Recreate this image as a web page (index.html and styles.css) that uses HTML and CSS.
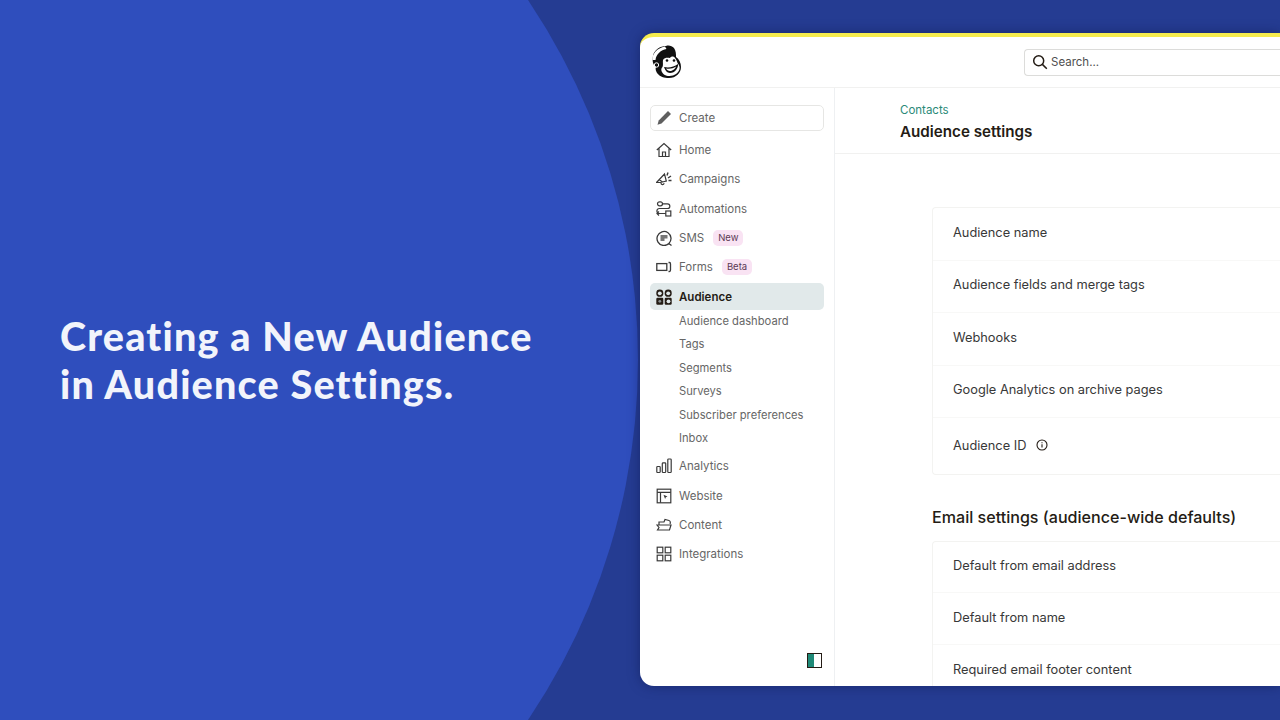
FILE: index.html
```html
<!DOCTYPE html>
<html lang="en">
<head>
    <meta charset="UTF-8">
    <meta name="viewport" content="width=device-width, initial-scale=1.0">
    <title>Creating a New Audience</title>
    <link rel="stylesheet" href="styles.css">
</head>
<body>
    <div class="stage">
        <div class="circle"></div>

        <div class="hero">
            <h1>Creating a New Audience<br>in Audience Settings.</h1>
        </div>

        <div class="window">
            <header class="topbar">
                <svg class="logo" viewBox="0 0 32 34" width="32" height="34">
                    <path d="M3 11C4 5 10 1 16 1c3-1 6 0 8 2 2 3 2 6 2 9 3 2 5 6 5 10 0 6-5 11-12 11-5 0-9-1-12-5-1-2-2-4-1-6-3-2-4-6-3-11z" fill="#111"/>
                    <path d="M2.500 15C2 9 7 3 15 1.500l1.500 2.500C11 5 6 9 5.500 15z" fill="#fff"/>
                    <circle cx="6.500" cy="20" r="2.200" fill="none" stroke="#fff" stroke-width="1"/>
                    <path d="M13 15c2-3 5-2 7-2 1-2 4-2 5 0 1 1 2 3 2.500 5 1.500 2 2.500 4 2 6-1 4-5 7-10 7-4 0-7-2-8-5-.5-2 0-3 1-4 1-2 0-5 .5-7z" fill="#fff"/>
                    <path d="M14 22c5 1 10 0 14-3 .5 4-3 9-8 9-3 0-5-3-6-6z" fill="#111"/>
                    <path d="M16 23.500c4 .5 7 0 10-2-.5 2-3 4.500-6 4.500-2 0-3-1-4-2.500z" fill="#fff"/>
                    <circle cx="17" cy="15.500" r="1.300" fill="#111"/>
                    <circle cx="24" cy="15.500" r="1.300" fill="#111"/>
                </svg>
                <div class="search">
                    <svg viewBox="0 0 16 16" width="16" height="16" fill="none" stroke="#241c15" stroke-width="1.500">
                        <circle cx="6.700" cy="6.700" r="5"/>
                        <path d="M10.400 10.400l4.400 4.400"/>
                    </svg>
                    <span>Search...</span>
                </div>
            </header>

            <div class="body">
                <nav class="sidebar">
                    <div class="create">
                        <svg class="icon" viewBox="0 0 16 16" fill="#5f5f5f"><path d="M12 1l3 3-9.500 9.500-4 1.200 1.200-4.200z"/></svg>
                        <span>Create</span>
                    </div>

                    <ul class="nav">
                        <li>
                            <svg class="icon" viewBox="0 0 16 16" fill="none" stroke="#3a3a3a" stroke-width="1.200"><path d="M.8 8L8 1.500 15.200 8M3 6.500V14.500h10V6.500M6.500 14.500V10h3v4.500"/></svg>
                            Home
                        </li>
                        <li>
                            <svg class="icon" viewBox="0 0 16 16" fill="none" stroke="#3a3a3a" stroke-width="1.200"><path d="M.5 11.500L8.500 3l1.800 7-6 1.500zM3 8.500l3.500 2.500M5 12c0 2 2.500 2.300 3.200.3"/><path d="M11 4.500l1-3M12 7l3-2M12.500 9.500H15.500" stroke-width="1.400"/></svg>
                            Campaigns
                        </li>
                        <li>
                            <svg class="icon" viewBox="0 0 16 16" fill="none" stroke="#3a3a3a" stroke-width="1.200"><rect x="1.500" y=".8" width="5" height="4" rx="2"/><rect x="9.800" y="10" width="5" height="5"/><path d="M6.500 2.800h5a2.300 2.300 0 0 1 0 4.700H3.400a2.300 2.300 0 0 0 0 5H9.800M3 10.500l-2 2 2 2"/></svg>
                            Automations
                        </li>
                        <li>
                            <svg class="icon" viewBox="0 0 16 16" fill="none" stroke="#3a3a3a" stroke-width="1.300"><path d="M15.500 15.500l-2.600-2A7 7 0 1 1 15 8a7 7 0 0 1-2.100 5.500"/><path d="M4.500 5h7v3.500h-3V11h-4z" fill="#777" stroke="none"/></svg>
                            SMS <span class="tag">New</span>
                        </li>
                        <li>
                            <svg class="icon" viewBox="0 0 16 16" fill="none" stroke="#3a3a3a" stroke-width="1.300"><rect x=".8" y="4.600" width="10" height="6.800"/><path d="M12.500 3.500h1c1 0 1 .6 1 1.500v6c0 1 0 1.500-1 1.500h-1"/></svg>
                            Forms <span class="tag">Beta</span>
                        </li>
                        <li class="active">
                            <svg class="icon" viewBox="0 0 16 16" fill="#241c15"><rect x=".3" y=".5" width="7" height="7.300" rx="3.400"/><rect x="8.700" y=".5" width="7" height="7.300" rx="3.400"/><rect x=".3" y="8.800" width="7" height="6.900" rx="1.200"/><rect x="8.700" y="8.800" width="7" height="6.900" rx="1.200"/><circle cx="3.800" cy="4.300" r="1.900" fill="#e1e9ea"/><circle cx="12.200" cy="4.300" r="1.900" fill="#e1e9ea"/><circle cx="12.500" cy="12.300" r="1.900" fill="#e1e9ea"/><circle cx="3.800" cy="12.300" r="1.400" fill="#8a9090"/></svg>
                            Audience
                        </li>
                    </ul>

                    <ul class="subnav">
                        <li>Audience dashboard</li>
                        <li>Tags</li>
                        <li>Segments</li>
                        <li>Surveys</li>
                        <li>Subscriber preferences</li>
                        <li>Inbox</li>
                    </ul>

                    <ul class="nav">
                        <li>
                            <svg class="icon" viewBox="0 0 16 16" fill="none" stroke="#3a3a3a" stroke-width="1.200"><rect x=".8" y="8.500" width="3.400" height="6" rx=".8"/><rect x="6.300" y="4.800" width="3.400" height="9.700" rx=".8"/><rect x="11.800" y="1" width="3.400" height="13.500" rx=".8"/></svg>
                            Analytics
                        </li>
                        <li>
                            <svg class="icon" viewBox="0 0 16 16" fill="none" stroke="#3a3a3a" stroke-width="1.200"><rect x="1.200" y="1.200" width="13.600" height="13.600"/><path d="M1.200 4.300h13.600M4.500 4.300v10.500"/><path d="M7.500 6.800l4 1.800-1.700.7-.7 1.800z" fill="#3a3a3a" stroke="none"/></svg>
                            Website
                        </li>
                        <li>
                            <svg class="icon" viewBox="0 0 16 16" fill="none" stroke="#3a3a3a" stroke-width="1.200"><path d="M3 8V5h5l1-2.500 4 1c1.500.5 1.500 2 1 3.500M1 8h14l-1.500 5H1.500l1.500-2.500z"/></svg>
                            Content
                        </li>
                        <li>
                            <svg class="icon" viewBox="0 0 16 16" fill="none" stroke="#3a3a3a" stroke-width="1.200"><rect x="1.200" y="1.200" width="5.600" height="5.600"/><rect x="9.200" y="1.200" width="5.600" height="5.600"/><rect x="1.200" y="9.200" width="5.600" height="5.600"/><rect x="9.200" y="9.200" width="5.600" height="5.600"/></svg>
                            Integrations
                        </li>
                    </ul>

                    <div class="collapse">
                        <div class="collapse-btn"></div>
                    </div>
                </nav>

                <main class="content">
                    <div class="page-head">
                        <a class="crumb">Contacts</a>
                        <h2>Audience settings</h2>
                    </div>

                    <div class="settings">
                        <ul class="card">
                            <li>Audience name</li>
                            <li>Audience fields and merge tags</li>
                            <li>Webhooks</li>
                            <li>Google Analytics on archive pages</li>
                            <li>
                                Audience ID
                                <svg viewBox="0 0 12 12" width="12" height="12" fill="none" stroke="#241c15" stroke-width="1.100"><circle cx="6" cy="6" r="5"/><path d="M6 5.300v3.200M6 3.200v1"/></svg>
                            </li>
                        </ul>

                        <h3>Email settings (audience-wide defaults)</h3>

                        <ul class="card card-email">
                            <li>Default from email address</li>
                            <li>Default from name</li>
                            <li>Required email footer content</li>
                        </ul>
                    </div>
                </main>
            </div>
        </div>
    </div>
</body>
</html>
```

FILE: styles.css
```css
* {
    box-sizing: border-box;
}

body {
    margin: 0;
    font-family: Inter, "Liberation Sans", sans-serif;
}

ul {
    list-style: none;
    margin: 0;
    padding: 0;
}

.stage {
    position: relative;
    width: 1280px;
    height: 720px;
    overflow: hidden;
    background: #253c92;
    display: flex;
}

.circle {
    position: absolute;
    left: -650px;
    top: -284px;
    width: 1288px;
    height: 1288px;
    border-radius: 50%;
    background: #2f4ebd;
}

.hero {
    position: relative;
    width: 640px;
    padding: 312px 0 0 60px;
}

.hero h1 {
    margin: 0;
    font-family: Lato, sans-serif;
    font-weight: 900;
    font-size: 39.500px;
    line-height: 48px;
    color: #f2f4fb;
    letter-spacing: 1.200px;
}

.window {
    position: relative;
    width: 640px;
    height: 653px;
    margin-top: 33px;
    background: #fff;
    border-top: 4px solid #f6ec4e;
    border-radius: 14px 0 0 14px;
    box-shadow: 0 0 12px rgba(15, 25, 80, 0.55);
    overflow: hidden;
    display: flex;
    flex-direction: column;
}

.topbar {
    height: 51px;
    flex: none;
    padding: 0 0 0 10px;
    display: flex;
    align-items: center;
    justify-content: space-between;
    border-bottom: 1px solid #f1f1f0;
}

.logo {
    flex: none;
}

.search {
    width: 256px;
    height: 27px;
    display: flex;
    align-items: center;
    gap: 3px;
    padding-left: 7px;
    border: 1px solid #dcdcda;
    border-right: 0;
    border-radius: 4px 0 0 4px;
    font-size: 11.500px;
    color: #4f4f4f;
}

.body {
    flex: 1;
    display: flex;
    min-height: 0;
}

.sidebar {
    width: 195px;
    flex: none;
    padding: 16.500px 10px 0;
    border-right: 1px solid #eef0f2;
    display: flex;
    flex-direction: column;
    font-size: 11.500px;
    color: #666;
}

.icon {
    width: 16px;
    height: 16px;
    flex: none;
}

.create {
    height: 26px;
    flex: none;
    display: flex;
    align-items: center;
    gap: 7px;
    padding-left: 5px;
    margin-bottom: 5px;
    border: 1px solid #e6e6e4;
    border-radius: 5px;
}

.nav li {
    height: 29.300px;
    display: flex;
    align-items: center;
    gap: 7px;
    padding-left: 6px;
}

.nav .active {
    height: 26.500px;
    margin-top: 1.500px;
    background: #e1e9ea;
    border-radius: 5px;
    font-weight: 600;
    color: #241c15;
}

.tag {
    margin-left: 2px;
    padding: 0 5px;
    height: 16px;
    line-height: 16px;
    font-size: 9.500px;
    color: #5b3a55;
    background: #f9e3f3;
    border-radius: 5px;
}

.subnav {
    margin: 0 0 1.500px;
    padding: 0 0 0 29px;
}

.subnav li {
    height: 23.400px;
    line-height: 23.400px;
    font-size: 11.200px;
}

.collapse {
    flex: 1;
    display: flex;
    align-items: flex-end;
    justify-content: flex-end;
    padding: 0 2px 18px 0;
}

.collapse-btn {
    width: 15px;
    height: 15px;
    border: 1.500px solid #241c15;
    background: linear-gradient(90deg, #1f8a78 50%, #fff 50%);
}

.content {
    flex: 1;
    min-width: 0;
}

.page-head {
    height: 66px;
    padding: 15px 0 0 65px;
    border-bottom: 1px solid #f1f1f0;
}

.crumb {
    display: block;
    font-size: 11.500px;
    line-height: 15px;
    color: #2b8a78;
}

.page-head h2 {
    margin: 4px 0 0;
    font-size: 15.200px;
    line-height: 20px;
    font-weight: 600;
    color: #241c15;
}

.settings {
    padding: 53px 0 0 97px;
}

.card {
    width: 400px;
    border: 1px solid #f3f3f1;
    border-right: 0;
    border-radius: 4px 0 0 4px;
    font-size: 12.800px;
    color: #383838;
}

.card li {
    height: 52.500px;
    padding: 0 0 3px 20px;
    display: flex;
    align-items: center;
    gap: 10px;
    border-bottom: 1px solid #f8f8f7;
}

.card li:last-child {
    height: 55.500px;
    padding-bottom: 1.500px;
    border-bottom: 0;
}

.card-email li,
.card-email li:last-child {
    height: 51.500px;
    padding-bottom: 2px;
}

.settings h3 {
    margin: 31px 0 13px;
    font-size: 16.100px;
    line-height: 22px;
    font-weight: 500;
    color: #241c15;
}
```
